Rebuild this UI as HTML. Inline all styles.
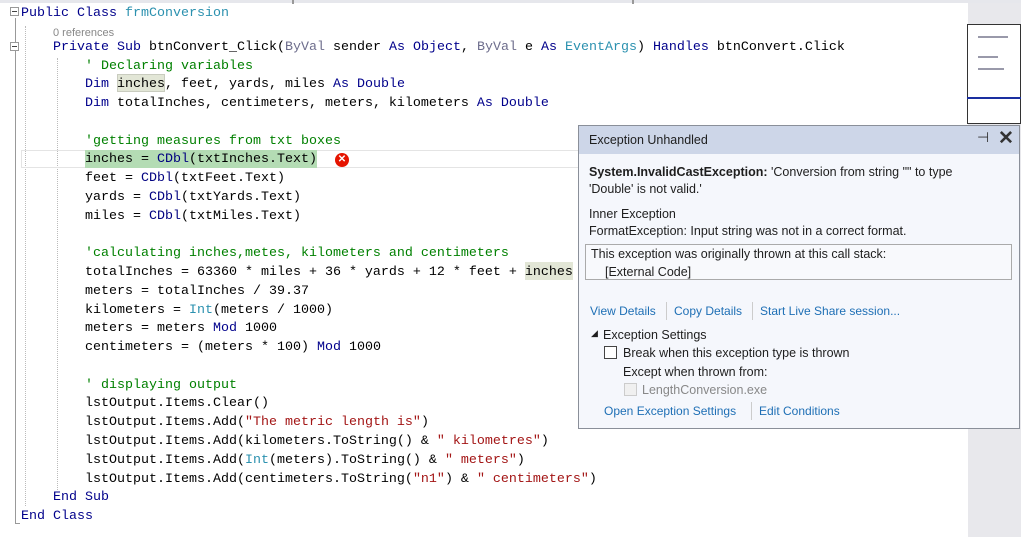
<!DOCTYPE html>
<html><head><meta charset="utf-8"><style>
body{margin:0;width:1021px;height:537px;background:#fff;overflow:hidden;position:relative;font-family:"Liberation Mono",monospace}
.code{position:absolute;left:0;top:4px}
.l{position:absolute;white-space:pre;font-size:13.33px;line-height:18.8px;color:#000}
.k{color:#00008b}.t{color:#2b91af}.c{color:#008000}.s{color:#a31515}.g{color:#6d6d8c}.f{color:#000080}
.pop{position:absolute;left:578px;top:125px;width:440px;height:302px;background:#f5f7fc;border:1px solid #8a8f99;font-family:"Liberation Sans",sans-serif;font-size:12.5px;color:#1e1e1e}
.pop div{position:absolute;white-space:nowrap}
.a{color:#1e6fb5;font-size:12px}
</style></head><body>
<div style="position:absolute;left:0;top:0;width:1021px;height:3px;background:#e6e7ec"></div>
<div style="position:absolute;left:292px;top:0;width:2px;height:4px;background:#999"></div>
<div style="position:absolute;left:632px;top:0;width:2px;height:4px;background:#999"></div>
<div style="position:absolute;left:15px;top:18px;width:1px;height:506px;background:#999"></div>
<div style="position:absolute;left:15px;top:523px;width:5px;height:1px;background:#999"></div>
<div style="position:absolute;left:10px;top:7px;width:9px;height:9px;border:1px solid #999;background:#fff;box-sizing:border-box"><div style="position:absolute;left:1px;top:3px;width:5px;height:1px;background:#444"></div></div>
<div style="position:absolute;left:10px;top:42px;width:9px;height:9px;border:1px solid #999;background:#fff;box-sizing:border-box"><div style="position:absolute;left:1px;top:3px;width:5px;height:1px;background:#444"></div></div>
<div style="position:absolute;left:25px;top:26px;width:0;height:480px;border-left:1px dotted #bbb"></div>
<div style="position:absolute;left:57px;top:58px;width:0;height:432px;border-left:1px dotted #bbb"></div>
<div style="position:absolute;left:21px;top:150px;width:560px;height:18px;border:1px solid #e4e4e4;box-sizing:border-box"></div>
<div style="position:absolute;left:85px;top:150px;width:232px;height:18px;background:#b4dcb4"></div>
<div style="position:absolute;left:117px;top:74px;width:48px;height:18px;background:#e2e6d6;border:1px solid #c9ccbf;box-sizing:border-box"></div>
<div style="position:absolute;left:525px;top:262px;width:48px;height:18px;background:#e2e6d6"></div>
<div style="position:absolute;left:335px;top:153px;width:14px;height:14px;border-radius:50%;background:#e51400;color:#fff;font:bold 10px 'Liberation Sans';text-align:center;line-height:14px">✕</div>
<div class="code">
<div class="l" style="left:21px;top:1px"><span class="k">Public Class</span> <span class="t">frmConversion</span></div>
<div class="l" style="left:53px;top:20px;font-family:'Liberation Sans';font-size:11px;color:#888">0 references</div>
<div class="l" style="left:53px;top:35px"><span class="k">Private Sub</span> btnConvert_Click(<span class="g">ByVal</span> sender <span class="k">As</span> <span class="k">Object</span>, <span class="g">ByVal</span> e <span class="k">As</span> <span class="t">EventArgs</span>) <span class="k">Handles</span> btnConvert.Click</div>
<div class="l" style="left:85px;top:54px"><span class="c">' Declaring variables</span></div>
<div class="l" style="left:85px;top:72px"><span class="k">Dim</span> inches, feet, yards, miles <span class="k">As Double</span></div>
<div class="l" style="left:85px;top:91px"><span class="k">Dim</span> totalInches, centimeters, meters, kilometers <span class="k">As Double</span></div>
<div class="l" style="left:85px;top:129px"><span class="c">'getting measures from txt boxes</span></div>
<div class="l" style="left:85px;top:147px">inches = <span class="f">CDbl</span>(txtInches.Text)</div>
<div class="l" style="left:85px;top:166px">feet = <span class="f">CDbl</span>(txtFeet.Text)</div>
<div class="l" style="left:85px;top:185px">yards = <span class="f">CDbl</span>(txtYards.Text)</div>
<div class="l" style="left:85px;top:204px">miles = <span class="f">CDbl</span>(txtMiles.Text)</div>
<div class="l" style="left:85px;top:241px"><span class="c">'calculating inches,metes, kilometers and centimeters</span></div>
<div class="l" style="left:85px;top:260px">totalInches = 63360 * miles + 36 * yards + 12 * feet + inches</div>
<div class="l" style="left:85px;top:279px">meters = totalInches / 39.37</div>
<div class="l" style="left:85px;top:298px">kilometers = <span class="t">Int</span>(meters / 1000)</div>
<div class="l" style="left:85px;top:316px">meters = meters <span class="k">Mod</span> 1000</div>
<div class="l" style="left:85px;top:335px">centimeters = (meters * 100) <span class="k">Mod</span> 1000</div>
<div class="l" style="left:85px;top:373px"><span class="c">' displaying output</span></div>
<div class="l" style="left:85px;top:391px">lstOutput.Items.Clear()</div>
<div class="l" style="left:85px;top:410px">lstOutput.Items.Add(<span class="s">"The metric length is"</span>)</div>
<div class="l" style="left:85px;top:429px">lstOutput.Items.Add(kilometers.ToString() &amp; <span class="s">" kilometres"</span>)</div>
<div class="l" style="left:85px;top:448px">lstOutput.Items.Add(<span class="t">Int</span>(meters).ToString() &amp; <span class="s">" meters"</span>)</div>
<div class="l" style="left:85px;top:467px">lstOutput.Items.Add(centimeters.ToString(<span class="s">"n1"</span>) &amp; <span class="s">" centimeters"</span>)</div>
<div class="l" style="left:53px;top:485px"><span class="k">End Sub</span></div>
<div class="l" style="left:21px;top:504px"><span class="k">End Class</span></div>
</div>
<div style="position:absolute;left:968px;top:3px;width:53px;height:534px;background:#e8e8ec"></div>
<div style="position:absolute;left:967px;top:24px;width:54px;height:100px;background:#fff;border:1px solid #333;box-sizing:border-box"></div>
<div style="position:absolute;left:967px;top:97px;width:54px;height:2px;background:#1a2fa0"></div>
<div style="position:absolute;left:978px;top:36px;width:30px;height:2px;background:#99a"></div>
<div style="position:absolute;left:978px;top:56px;width:20px;height:2px;background:#99a"></div>
<div style="position:absolute;left:978px;top:68px;width:26px;height:2px;background:#99a"></div>
<div class="pop">
<div style="left:0;top:0;width:440px;height:28px;background:#cdd6e8"></div>
<div style="left:10px;top:7px;font-size:12.5px">Exception Unhandled</div>
<div style="left:398px;top:3px;font-size:14px;color:#333">⊣</div>
<div style="left:419px;top:1px;font-size:19px;color:#333;font-weight:bold">✕</div>
<div style="left:10px;top:39px"><b>System.InvalidCastException:</b> 'Conversion from string "" to type</div>
<div style="left:10px;top:56px">'Double' is not valid.'</div>
<div style="left:10px;top:81px">Inner Exception</div>
<div style="left:10px;top:98px">FormatException: Input string was not in a correct format.</div>
<div style="left:6px;top:118px;width:425px;height:34px;border:1px solid #aaa;background:#f8f9fc"></div>
<div style="left:12px;top:121px">This exception was originally thrown at this call stack:</div>
<div style="left:26px;top:139px">[External Code]</div>
<div class="a" style="left:11px;top:178px">View Details</div>
<div style="left:87px;top:176px;width:1px;height:18px;background:#ccc"></div>
<div class="a" style="left:95px;top:178px">Copy Details</div>
<div style="left:173px;top:176px;width:1px;height:18px;background:#ccc"></div>
<div class="a" style="left:181px;top:178px">Start Live Share session...</div>
<div style="left:12px;top:202px;font-size:9px">◢</div>
<div style="left:24px;top:202px">Exception Settings</div>
<div style="left:25px;top:220px;width:11px;height:11px;border:1px solid #444;background:#fff"></div>
<div style="left:44px;top:220px">Break when this exception type is thrown</div>
<div style="left:44px;top:239px">Except when thrown from:</div>
<div style="left:45px;top:257px;width:11px;height:11px;border:1px solid #ccc;background:#f0f0f0"></div>
<div style="left:63px;top:257px;color:#888">LengthConversion.exe</div>
<div class="a" style="left:25px;top:278px">Open Exception Settings</div>
<div style="left:172px;top:276px;width:1px;height:18px;background:#ccc"></div>
<div class="a" style="left:180px;top:278px">Edit Conditions</div>
</div>
</body></html>
